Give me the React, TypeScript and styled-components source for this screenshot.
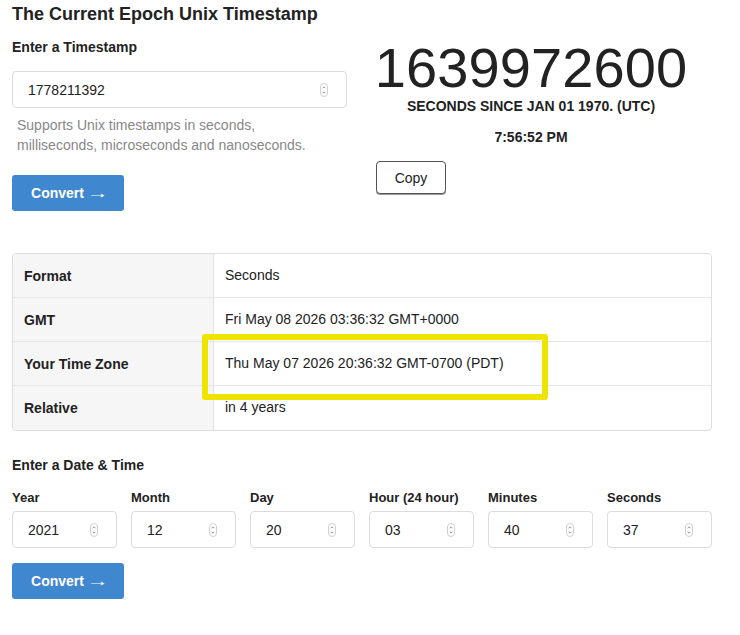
import React from "react";
import styled, { createGlobalStyle } from "styled-components";

const GlobalStyle = createGlobalStyle`
  html, body { margin: 0; padding: 0; background: #fff; }
  body { font-family: "Liberation Sans", Arial, Helvetica, sans-serif; color: #222; }
  * { box-sizing: border-box; }
`;

const Page = styled.div`
  width: 740px;
  padding: 0 12px;
`;

const Title = styled.h1`
  margin: 0;
  padding-top: 3px;
  font-size: 18px;
  line-height: 22px;
  font-weight: 700;
  color: #222;
`;

const TopGrid = styled.div`
  display: grid;
  grid-template-columns: 335px 310px;
  column-gap: 29px;
`;

const LeftCol = styled.div`
  display: flex;
  flex-direction: column;
  align-items: flex-start;
`;

const SectionLabel = styled.div<{ $mt: number }>`
  margin-top: ${(p) => p.$mt}px;
  font-size: 14px;
  line-height: 16px;
  font-weight: 700;
  color: #222;
`;

const Field = styled.div<{ $w?: number; $mt?: number }>`
  display: flex;
  align-items: center;
  width: ${(p) => (p.$w ? `${p.$w}px` : "100%")};
  height: 37px;
  margin-top: ${(p) => p.$mt ?? 0}px;
  border: 1px solid #dcdcdc;
  border-radius: 4px;
  padding: 0 18px 0 15px;
  background: #fff;
`;

const FieldInput = styled.input`
  flex: 1;
  min-width: 0;
  border: none;
  outline: none;
  padding: 0;
  font-family: inherit;
  font-size: 14px;
  color: #222;
  background: transparent;
`;

const Help = styled.p`
  margin: 7px 0 0 5px;
  font-size: 14px;
  line-height: 20px;
  color: #888;
`;

const PrimaryButton = styled.button<{ $mt: number }>`
  margin-top: ${(p) => p.$mt}px;
  width: 112px;
  height: 36px;
  display: flex;
  align-items: center;
  justify-content: center;
  padding: 0 0 1px 2px;
  border: none;
  border-radius: 3px;
  background: #3f87cf;
  color: #fff;
  font-family: inherit;
  font-size: 14px;
  font-weight: 700;
  cursor: pointer;
`;

const Arrow = styled.span`
  font-family: "Liberation Sans", sans-serif;
  font-weight: 400;
  font-size: 15px;
  line-height: 1;
  display: inline-block;
  transform: scaleX(1.45);
  margin-left: 6px;
  margin-right: 2px;
`;

const RightCol = styled.div`
  display: flex;
  flex-direction: column;
  align-items: center;
  padding-top: 15px;
`;

const BigNumber = styled.div`
  font-size: 56px;
  line-height: 56px;
  color: #222;
  letter-spacing: 0.1px;
`;

const Caption = styled.div<{ $mt: number }>`
  margin-top: ${(p) => p.$mt}px;
  font-size: 14px;
  line-height: 16px;
  font-weight: 700;
  color: #222;
`;

const CopyButton = styled.button`
  align-self: flex-start;
  margin-top: 16px;
  width: 70px;
  height: 33px;
  border: 1px solid #555;
  border-radius: 4px;
  background: #fff;
  box-shadow: 0 1px 0 #999;
  font-family: inherit;
  font-size: 14px;
  color: #222;
`;

const TableWrap = styled.div`
  position: relative;
  margin-top: 42px;
  width: 700px;
`;

const Table = styled.div`
  display: grid;
  grid-template-columns: 201px 1fr;
  border: 1px solid #dedede;
  border-radius: 4px;
  overflow: hidden;
`;

const HeadCell = styled.div<{ $last?: boolean }>`
  height: 44px;
  display: flex;
  align-items: center;
  padding-left: 11px;
  background: #f6f6f6;
  border-right: 1px solid #e2e2e2;
  border-bottom: ${(p) => (p.$last ? "none" : "1px solid #e6e6e6")};
  font-size: 14px;
  font-weight: 700;
  color: #222;
`;

const ValueCell = styled.div<{ $last?: boolean }>`
  height: 44px;
  display: flex;
  align-items: center;
  padding-left: 11px;
  padding-bottom: 2px;
  border-bottom: ${(p) => (p.$last ? "none" : "1px solid #e6e6e6")};
  font-size: 14px;
  color: #222;
`;

const Highlight = styled.div`
  position: absolute;
  left: 190px;
  top: 81px;
  width: 346px;
  height: 66px;
  border: 6px solid #efe300;
  border-radius: 3px;
  pointer-events: none;
`;

const DateGrid = styled.div`
  margin-top: 17px;
  display: grid;
  grid-template-columns: repeat(6, 105px);
  column-gap: 14px;
`;

const DateField = styled.div`
  display: flex;
  flex-direction: column;
`;

const DateLabel = styled.label`
  font-size: 13px;
  line-height: 16px;
  font-weight: 700;
  color: #222;
  margin-bottom: 5px;
`;

const Spinner = () => (
  <svg width="8" height="14" viewBox="0 0 8 14" style={{ flex: "none" }}>
    <rect x="0.5" y="0.5" width="7" height="13" rx="3.5" fill="#fff" stroke="#cfcfcf" />
    <path d="M2.6 5.2 L4 3.8 L5.4 5.2" fill="none" stroke="#777" strokeWidth="0.8" />
    <path d="M2.6 8.8 L4 10.2 L5.4 8.8" fill="none" stroke="#777" strokeWidth="0.8" />
  </svg>
);

const rows = [
  ["Format", "Seconds"],
  ["GMT", "Fri May 08 2026 03:36:32 GMT+0000"],
  ["Your Time Zone", "Thu May 07 2026 20:36:32 GMT-0700 (PDT)"],
  ["Relative", "in 4 years"],
];

const dateFields = [
  ["Year", "2021"],
  ["Month", "12"],
  ["Day", "20"],
  ["Hour (24 hour)", "03"],
  ["Minutes", "40"],
  ["Seconds", "37"],
];

export default function App() {
  return (
    <Page>
      <GlobalStyle />
      <Title>The Current Epoch Unix Timestamp</Title>
      <TopGrid>
        <LeftCol>
          <SectionLabel $mt={14}>Enter a Timestamp</SectionLabel>
          <Field $mt={16}>
            <FieldInput defaultValue="1778211392" />
            <Spinner />
          </Field>
          <Help>
            Supports Unix timestamps in seconds,
            <br />
            milliseconds, microseconds and nanoseconds.
          </Help>
          <PrimaryButton $mt={20}>
            Convert<Arrow>→</Arrow>
          </PrimaryButton>
        </LeftCol>
        <RightCol>
          <BigNumber>1639972600</BigNumber>
          <Caption $mt={2}>SECONDS SINCE JAN 01 1970. (UTC)</Caption>
          <Caption $mt={15}>7:56:52 PM</Caption>
          <CopyButton>Copy</CopyButton>
        </RightCol>
      </TopGrid>
      <TableWrap>
        <Table>
          {rows.map(([k, v], i) => (
            <React.Fragment key={k}>
              <HeadCell $last={i === rows.length - 1}>{k}</HeadCell>
              <ValueCell $last={i === rows.length - 1}>{v}</ValueCell>
            </React.Fragment>
          ))}
        </Table>
        <Highlight />
      </TableWrap>
      <SectionLabel $mt={26}>Enter a Date &amp; Time</SectionLabel>
      <DateGrid>
        {dateFields.map(([label, value]) => (
          <DateField key={label}>
            <DateLabel>{label}</DateLabel>
            <Field $w={105}>
              <FieldInput defaultValue={value} />
              <Spinner />
            </Field>
          </DateField>
        ))}
      </DateGrid>
      <PrimaryButton $mt={15}>
        Convert<Arrow>→</Arrow>
      </PrimaryButton>
    </Page>
  );
}
